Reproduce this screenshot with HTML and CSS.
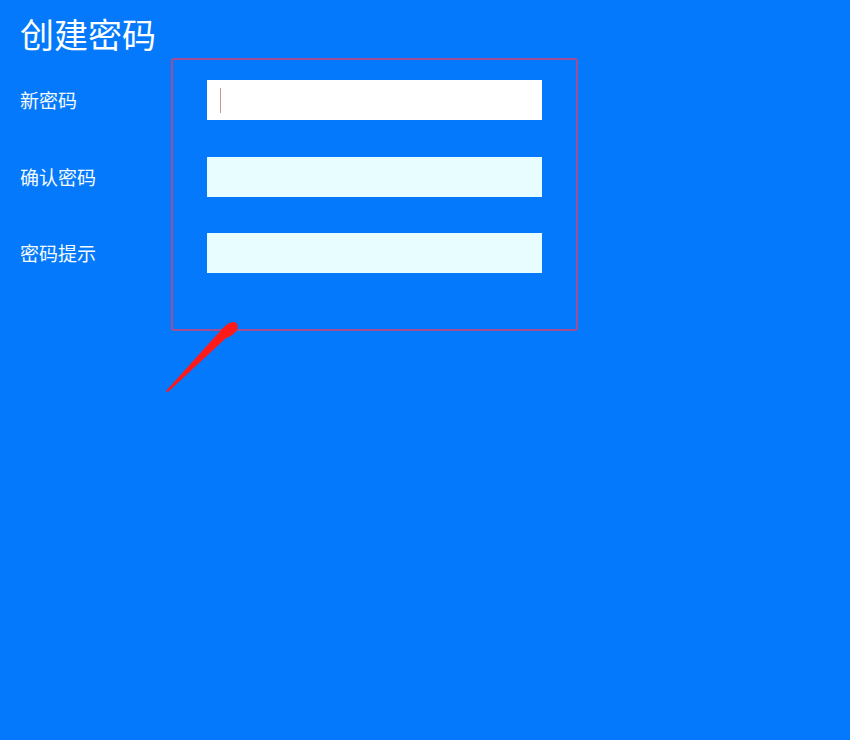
FILE: index.html
```html
<!DOCTYPE html>
<html lang="zh-CN">
<head>
<meta charset="utf-8">
<title>创建密码</title>
<link rel="stylesheet" href="styles.css">
</head>
<body>
<div class="page">
  <h1 class="title">创建密码</h1>
  <div class="form">
    <div class="label">新密码</div>
    <div class="field field-active"><span class="caret"></span></div>
    <div class="label">确认密码</div>
    <div class="field"></div>
    <div class="label">密码提示</div>
    <div class="field"></div>
  </div>
  <div class="highlight"></div>
  <svg class="arrow" width="850" height="740" viewBox="0 0 850 740">
    <path d="M166 391 L222 329 Q229 321 235 322 Q239 324 237 330 Q233 336 226 338 L169 391 Q167 393 166 391 Z" fill="#ff1a1a"/>
  </svg>
</div>
</body>
</html>
```
FILE: styles.css
```css
html, body {
  margin: 0;
  padding: 0;
  background: #0479fb;
  width: 850px;
  height: 740px;
  overflow: hidden;
}
.page {
  position: relative;
  width: 850px;
  height: 740px;
  box-sizing: border-box;
  padding: 12px 20px 0;
  font-family: "Noto Sans CJK SC", "Noto Sans", sans-serif;
  color: #ffffff;
}
.title {
  margin: 0;
  font-size: 34px;
  line-height: 44px;
  font-weight: 400;
}
.form {
  display: grid;
  grid-template-columns: 187px 335px;
  grid-auto-rows: 40px;
  row-gap: 36.5px;
  margin-top: 24px;
  align-items: center;
}
.label {
  font-size: 19px;
  line-height: 40px;
  color: #f4fbff;
}
.field {
  height: 40px;
  background: #e8fdff;
  display: flex;
  align-items: center;
  padding-left: 13px;
  box-sizing: border-box;
}
.field-active {
  background: #ffffff;
}
.caret {
  width: 1px;
  height: 25px;
  background: #c79a95;
}
.highlight {
  position: absolute;
  left: 171px;
  top: 58px;
  width: 403px;
  height: 269px;
  border: 2px solid #a24e96;
  border-radius: 3px;
}
.arrow {
  position: absolute;
  left: 0;
  top: 0;
}
```
